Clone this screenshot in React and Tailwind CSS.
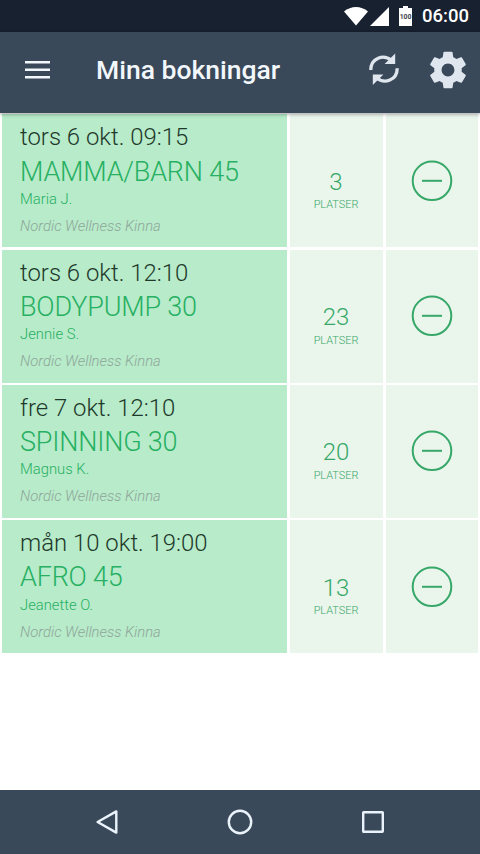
import React from "react";

const bookings = [
  { date: "tors 6 okt. 09:15", name: "MAMMA/BARN 45", coach: "Maria J.", spots: 3 },
  { date: "tors 6 okt. 12:10", name: "BODYPUMP 30", coach: "Jennie S.", spots: 23 },
  { date: "fre 7 okt. 12:10", name: "SPINNING 30", coach: "Magnus K.", spots: 20 },
  { date: "mån 10 okt. 19:00", name: "AFRO 45", coach: "Jeanette O.", spots: 13 },
];

function StatusBar() {
  return (
    <div className="h-8 shrink-0 flex items-center justify-end bg-[#182130] pr-[11px] text-white">
      <svg className="w-6 h-[19px]" viewBox="0 0 24 19" fill="#fff">
        <path d="M0 4.6C7 -1.5 17 -1.5 24 4.6L12 18.6Z" />
      </svg>
      <svg className="w-[19px] h-[19px] ml-[2px]" viewBox="0 0 19 19" fill="#fff">
        <path d="M19 0V19H0Z" />
      </svg>
      <svg className="w-[13px] h-5 ml-[10px]" viewBox="0 0 13 20">
        <path d="M4 0h5v2h4v18H0V2h4z" fill="#fff" />
        <text
          x="6.5"
          y="12.8"
          textAnchor="middle"
          fontSize="6.8"
          fontWeight="700"
          fontFamily="Roboto, sans-serif"
          fill="#3a4048"
        >
          100
        </text>
      </svg>
      <span className="ml-[10px] w-[47px] whitespace-nowrap text-[18.5px] leading-none font-medium">
        06:00
      </span>
    </div>
  );
}

function Header() {
  return (
    <header className="relative z-10 h-[81px] shrink-0 flex items-center bg-[#3a4959] pl-[25px] pr-[14px] pb-[5px] shadow-[0_1px_4px_rgba(0,0,0,0.4)]">
      <svg className="w-[25px] h-[18px]" viewBox="0 0 25 18" fill="#f2f7fc">
        <path d="M0 0h25v2.6H0zM0 7.5h25v2.6H0zM0 15h25v2.6H0z" />
      </svg>
      <h1 className="ml-[46px] flex-1 whitespace-nowrap text-[26.5px] leading-none font-medium text-[#f2f7fc]">
        Mina bokningar
      </h1>
      <svg
        className="w-8 h-[34px]"
        viewBox="0 0 32 34"
        fill="none"
        stroke="#dfe6ee"
        strokeWidth="3.3"
      >
        <path d="M2.8 17C2.8 5 15.5 0.6 23.5 7.4" />
        <path d="M29.2 15.2C29.2 27.2 16.5 31.6 8.5 24.8" />
        <path d="M27.2 0.4V11H16.6Z" fill="#dfe6ee" stroke="none" />
        <path d="M4.8 32V21.6H15.4Z" fill="#dfe6ee" stroke="none" />
      </svg>
      <svg className="w-[44px] h-[44px] ml-[26px] -mr-[4px]" viewBox="0 0 24 24" fill="#dfe6ee">
        <path d="M19.43 12.98c.04-.32.07-.64.07-.98s-.03-.66-.07-.98l2.11-1.65c.19-.15.24-.42.12-.64l-2-3.46c-.12-.22-.39-.3-.61-.22l-2.49 1c-.52-.4-1.08-.73-1.69-.98l-.38-2.65C14.46 2.18 14.25 2 14 2h-4c-.25 0-.46.18-.49.42l-.38 2.65c-.61.25-1.17.59-1.69.98l-2.49-1c-.23-.09-.49 0-.61.22l-2 3.46c-.13.22-.07.49.12.64l2.11 1.65c-.04.32-.07.65-.07.98s.03.66.07.98l-2.11 1.65c-.19.15-.24.42-.12.64l2 3.46c.12.22.39.3.61.22l2.49-1c.52.4 1.08.73 1.69.98l.38 2.65c.03.24.24.42.49.42h4c.25 0 .46-.18.49-.42l.38-2.65c.61-.25 1.17-.59 1.69-.98l2.49 1c.23.09.49 0 .61-.22l2-3.46c.12-.22.07-.49-.12-.64l-2.11-1.65zM12 15.5c-1.93 0-3.5-1.57-3.5-3.5s1.57-3.5 3.5-3.5 3.5 1.57 3.5 3.5-1.57 3.5-3.5 3.5z" />
      </svg>
    </header>
  );
}

function BookingRow({ booking }) {
  return (
    <div className="grid h-[133px] grid-cols-[285px_93px_92px] gap-x-[3px]">
      <div className="bg-[#b7ebca] pl-[18px] pt-[9px] whitespace-nowrap">
        <p className="text-[23.9px] leading-[28px] font-light text-[#1f3a2b]">{booking.date}</p>
        <p className="mt-[1.25px] text-[27px] leading-[39px] font-light tracking-[-0.2px] text-[#27b062]">
          {booking.name}
        </p>
        <p className="-mt-[0.75px] text-[14.8px] leading-[17px] font-light text-[#27b062]">
          {booking.coach}
        </p>
        <p className="mt-[10px] text-[14.8px] leading-[17px] font-light italic text-[#8fa699]">
          Nordic Wellness Kinna
        </p>
      </div>
      <div className="flex flex-col items-center bg-[#eaf5eb] pr-px pt-[53.5px] text-[#37a869]">
        <span className="text-[24px] leading-[29px] font-light">{booking.spots}</span>
        <span className="mt-[0.5px] text-[10.9px] leading-[16px] font-light">PLATSER</span>
      </div>
      <div className="flex items-center justify-center bg-[#eaf5eb]">
        <svg
          className="w-[42px] h-[42px]"
          viewBox="0 0 42 42"
          fill="none"
          stroke="#37a869"
          strokeWidth="2"
        >
          <circle cx="21" cy="20.8" r="19.3" />
          <path d="M11 20.8h20" />
        </svg>
      </div>
    </div>
  );
}

function NavBar() {
  return (
    <nav className="h-16 shrink-0 flex items-center justify-between bg-[#3a4959] px-[95px]">
      <svg className="w-6 h-[26px]" viewBox="0 0 24 26" fill="none" stroke="#eaf2fb" strokeWidth="2.4">
        <path d="M21.3 2.4V23.6L2.6 13Z" strokeLinejoin="round" />
      </svg>
      <svg className="w-[26px] h-[26px]" viewBox="0 0 26 26" fill="none" stroke="#eaf2fb" strokeWidth="2.4">
        <circle cx="13" cy="13" r="11.2" />
      </svg>
      <svg className="w-6 h-6" viewBox="0 0 24 24" fill="none" stroke="#eaf2fb" strokeWidth="2.4">
        <rect x="2.2" y="2.2" width="19.6" height="19.6" rx="0.5" />
      </svg>
    </nav>
  );
}

export default function App() {
  return (
    <div className="flex h-screen w-full flex-col overflow-hidden bg-white font-['Roboto',sans-serif]">
      <StatusBar />
      <Header />
      <main className="flex flex-1 flex-col gap-[2.25px] px-[2px] pt-[1.25px]">
        {bookings.map((b) => (
          <BookingRow key={b.date} booking={b} />
        ))}
      </main>
      <NavBar />
    </div>
  );
}
